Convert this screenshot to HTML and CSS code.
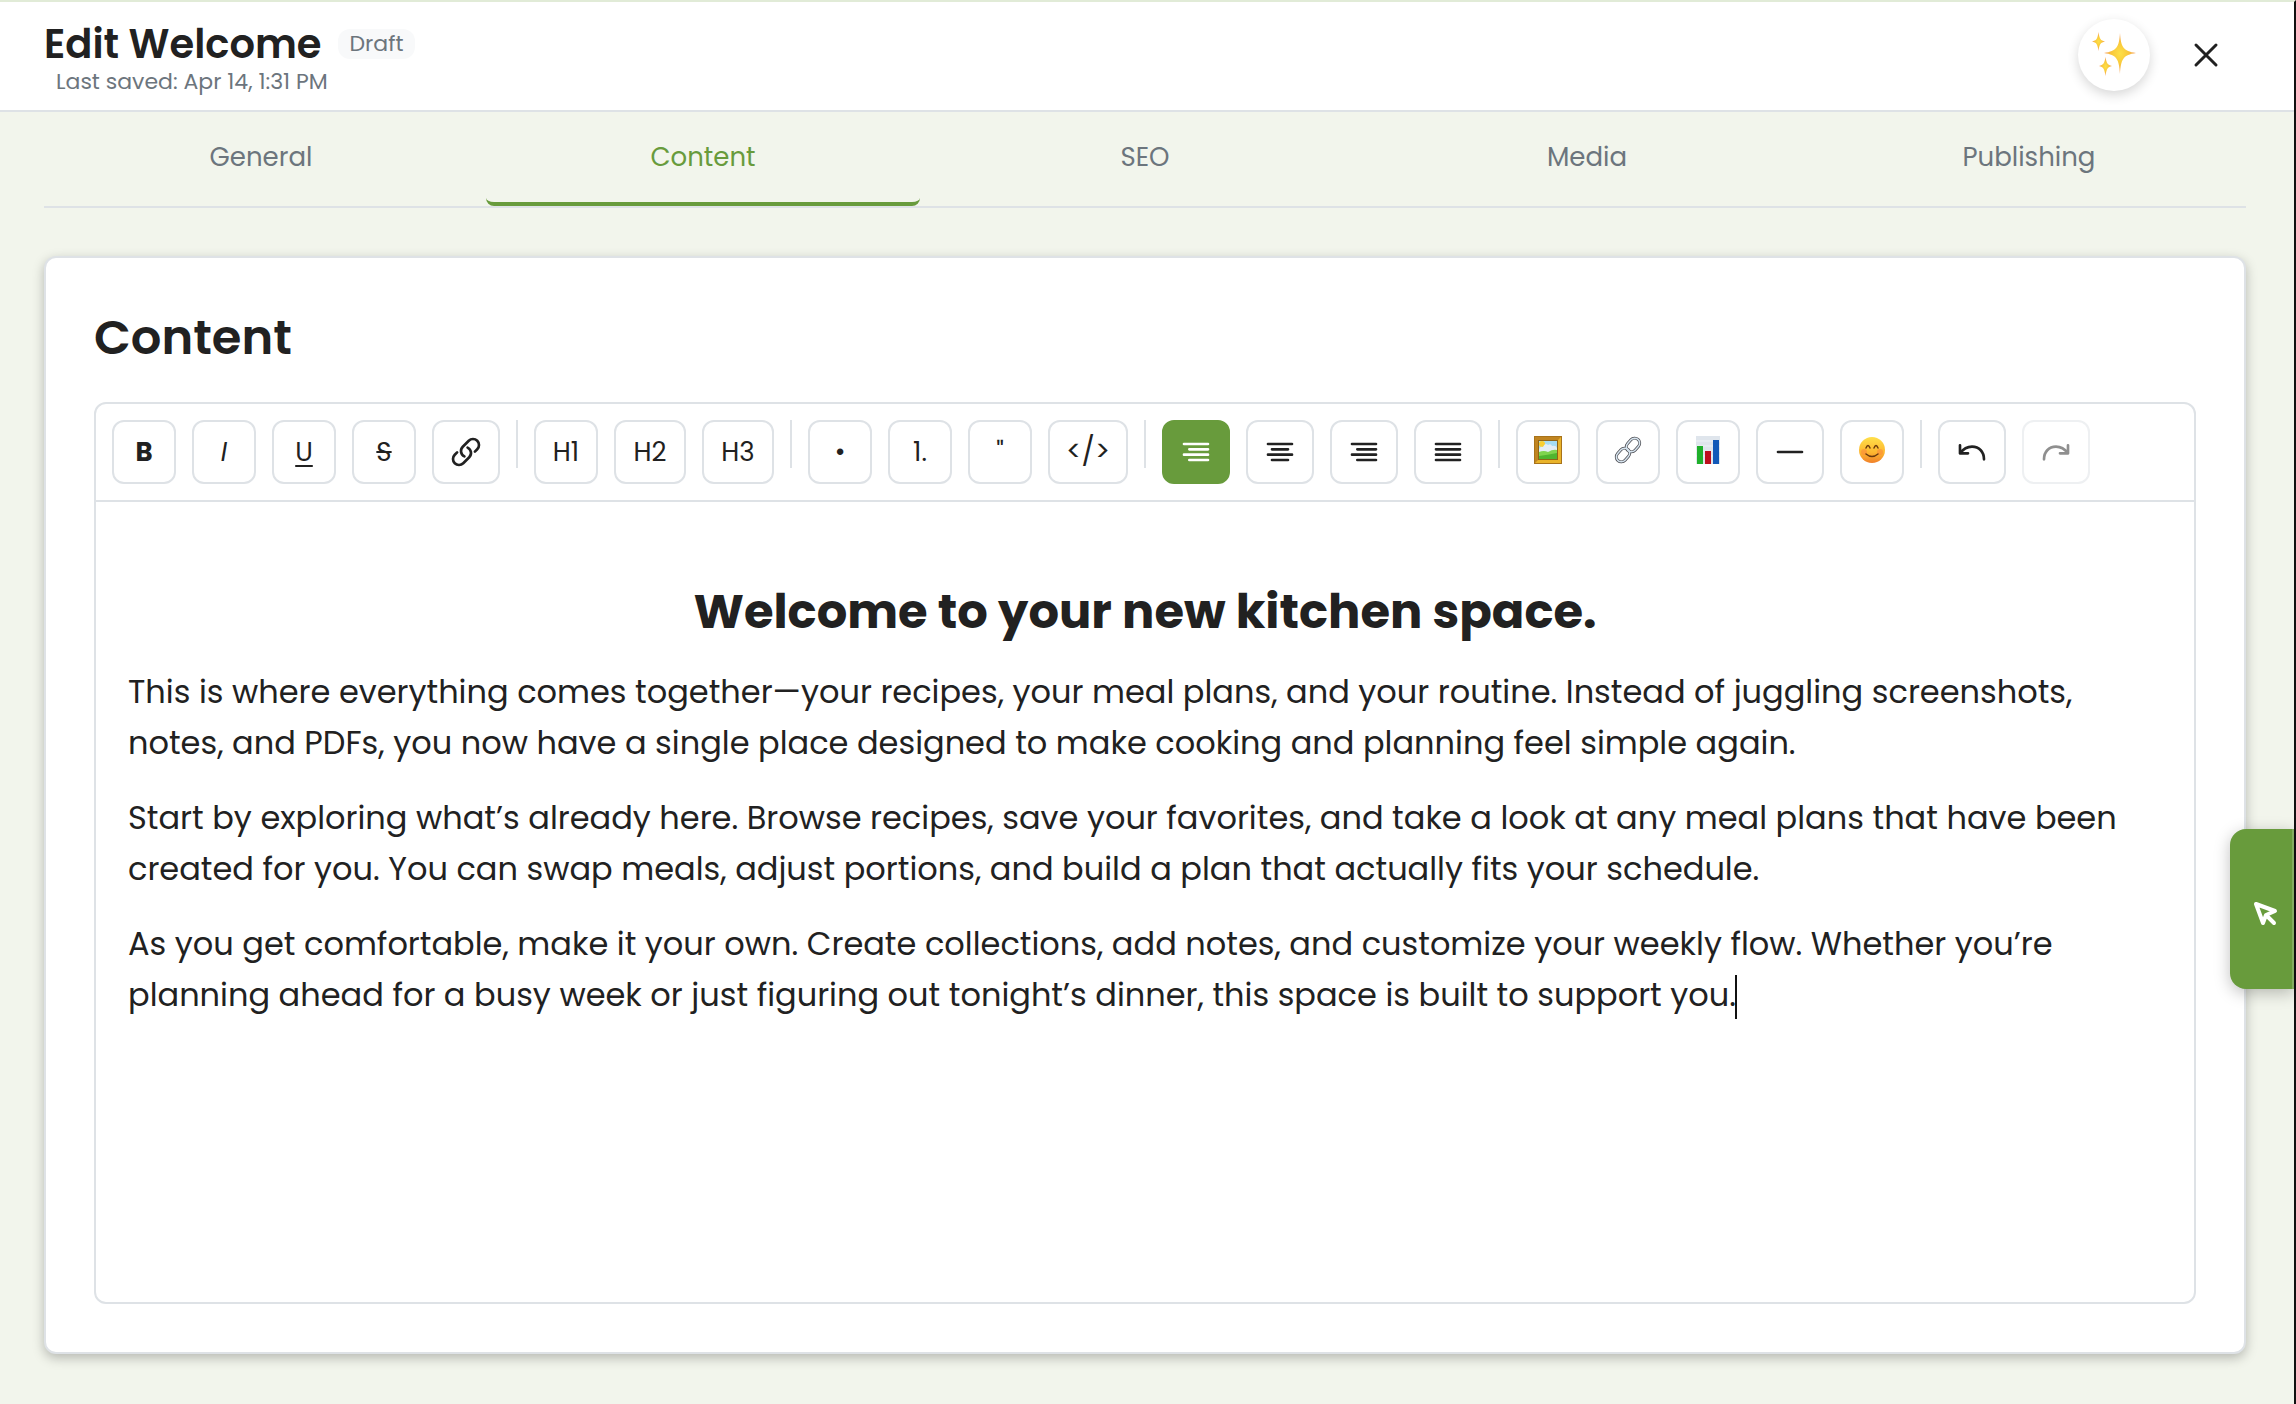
FILE: index.html
```html
<!DOCTYPE html>
<html lang="en">
<head>
    <meta charset="UTF-8">
    <meta name="viewport" content="width=device-width, initial-scale=1.0">
    <title>Edit Welcome</title>
    <link rel="stylesheet" href="styles.css">
</head>
<body>
    <header class="page-header">
        <div class="header-info">
            <div class="title-row">
                <h1>Edit Welcome</h1>
                <span class="badge">Draft</span>
            </div>
            <p class="last-saved">Last saved: Apr 14, 1:31 PM</p>
        </div>
        <div class="header-actions">
            <button type="button" class="ai-btn" aria-label="AI assistant">
                <svg width="48" height="48" viewBox="0 0 48 48">
                    <defs>
                        <radialGradient id="spark">
                            <stop offset="0" stop-color="#fde047"/>
                            <stop offset="0.5" stop-color="#f9c93b"/>
                            <stop offset="1" stop-color="#f59a5a"/>
                        </radialGradient>
                    </defs>
                    <g fill="url(#spark)">
                        <path d="M30 2C31 16 33 20 46 22C33 24 31 28 30 43C29 28 27 24 14 22C27 20 29 16 30 2Z"/>
                        <path d="M8.500 1C9.500 8 10.500 9.500 15 10.500C10.500 11.500 9.500 13 8.500 20C7.500 13 6.500 11.500 2 10.500C6.500 9.500 7.500 8 8.500 1Z"/>
                        <path d="M15.500 26C16.500 32 17.500 34 22 35C17.500 36 16.500 38 15.500 45C14.500 38 13.500 36 9 35C13.500 34 14.500 32 15.500 26Z"/>
                    </g>
                </svg>
            </button>
            <button type="button" class="close-btn" aria-label="Close">
                <svg width="32" height="32" viewBox="0 0 32 32">
                    <path d="M6 6L26 26M26 6L6 26" fill="none" stroke="currentColor" stroke-width="3" stroke-linecap="round"/>
                </svg>
            </button>
        </div>
    </header>

    <nav class="tabs">
        <button type="button" class="tab">General</button>
        <button type="button" class="tab active">Content</button>
        <button type="button" class="tab">SEO</button>
        <button type="button" class="tab">Media</button>
        <button type="button" class="tab">Publishing</button>
    </nav>

    <main class="card">
        <h2 class="card-title">Content</h2>
        <div class="editor">
            <div class="toolbar">
                <button type="button" class="tool"><b>B</b></button>
                <button type="button" class="tool"><i>I</i></button>
                <button type="button" class="tool"><u>U</u></button>
                <button type="button" class="tool"><s>S</s></button>
                <button type="button" class="tool tool-icon" aria-label="Link">
                    <svg class="icon" viewBox="0 0 24 24"><path d="M13.190 8.688a4.500 4.500 0 0 1 1.242 7.244l-4.500 4.500a4.500 4.500 0 0 1-6.364-6.364l1.757-1.757m13.350-.622l1.757-1.757a4.500 4.500 0 0 0-6.364-6.364l-4.500 4.500a4.500 4.500 0 0 0 1.242 7.244"/></svg>
                </button>
                <span class="separator"></span>

                <button type="button" class="tool">H1</button>
                <button type="button" class="tool tool-wide">H2</button>
                <button type="button" class="tool tool-wide">H3</button>
                <span class="separator"></span>

                <button type="button" class="tool">•</button>
                <button type="button" class="tool">1.</button>
                <button type="button" class="tool">"</button>
                <button type="button" class="tool tool-code">&lt;/&gt;</button>
                <span class="separator"></span>

                <button type="button" class="tool tool-icon active" aria-label="Align left">
                    <svg class="icon" viewBox="0 0 24 24"><path d="M3 6H21M7 10H21M3 14H21M7 18H21"/></svg>
                </button>
                <button type="button" class="tool tool-icon" aria-label="Align center">
                    <svg class="icon" viewBox="0 0 24 24"><path d="M3 6H21M6 10H18M3 14H21M6 18H18"/></svg>
                </button>
                <button type="button" class="tool tool-icon" aria-label="Align right">
                    <svg class="icon" viewBox="0 0 24 24"><path d="M3 6H21M7 10H21M3 14H21M7 18H21"/></svg>
                </button>
                <button type="button" class="tool tool-icon" aria-label="Justify">
                    <svg class="icon" viewBox="0 0 24 24"><path d="M3 6H21M3 10H21M3 14H21M3 18H21"/></svg>
                </button>
                <span class="separator"></span>

                <button type="button" class="tool tool-emoji" aria-label="Insert image">
                    <svg width="28" height="28" viewBox="0 0 28 28">
                        <rect width="28" height="28" fill="#a8731a"/>
                        <rect x="1" y="1" width="26" height="26" fill="#e9b32a"/>
                        <path d="M1 1H27L24 4H4V24L1 27Z" fill="#c08420"/>
                        <rect x="4" y="4" width="20" height="20" fill="#8f6416"/>
                        <rect x="5" y="5" width="18" height="18" fill="#a5dcf2"/>
                        <circle cx="8" cy="8" r="3" fill="#f9cf2f"/>
                        <path d="M5 14q1-4 4-3q2-5 5-2q3-2 4 1q4-1 5 2v4H5z" fill="#e4edf3"/>
                        <path d="M5 16q5-2 9 0q5-3 9-2v9H5z" fill="#7fd44e"/>
                        <path d="M5 20q8-1 18-3v6H5z" fill="#4fb52f"/>
                    </svg>
                </button>
                <button type="button" class="tool tool-emoji" aria-label="Attach file">
                    <svg width="28" height="28" viewBox="0 0 28 28" fill="none">
                        <g stroke="#4a4a50" stroke-width="3">
                            <rect x="-5" y="-7.500" width="10" height="15" rx="5" transform="translate(9 19) rotate(42)"/>
                            <rect x="-5" y="-7.500" width="10" height="15" rx="5" transform="translate(19 9) rotate(42)"/>
                        </g>
                        <g stroke="#d5e3ee" stroke-width="1.500">
                            <rect x="-5" y="-7.500" width="10" height="15" rx="5" transform="translate(19 9) rotate(42)"/>
                            <rect x="-5" y="-7.500" width="10" height="15" rx="5" transform="translate(9 19) rotate(42)"/>
                        </g>
                    </svg>
                </button>
                <button type="button" class="tool tool-emoji" aria-label="Insert chart">
                    <svg width="28" height="28" viewBox="0 0 28 28">
                        <rect x="2" width="24" height="28" fill="#dfe5ec"/>
                        <path d="M2 5H26M2 10H26M2 15H26M2 20H26" stroke="#eef2f6"/>
                        <rect x="3" y="10" width="6" height="18" fill="#1fb02b"/>
                        <rect x="11" y="15" width="6" height="13" fill="#bd0f1d"/>
                        <rect x="19" y="4" width="6" height="24" fill="#1259b8"/>
                    </svg>
                </button>
                <button type="button" class="tool tool-icon" aria-label="Horizontal rule">
                    <svg class="icon" viewBox="0 0 24 24"><path d="M3 12H21"/></svg>
                </button>
                <button type="button" class="tool tool-emoji" aria-label="Insert emoji">
                    <svg width="28" height="28" viewBox="0 0 28 28" fill="none" stroke-linecap="round">
                        <defs>
                            <linearGradient id="face" x2="0" y2="1">
                                <stop offset="0" stop-color="#ffe04a"/>
                                <stop offset="0.6" stop-color="#fdb62f"/>
                                <stop offset="1" stop-color="#f0802a"/>
                            </linearGradient>
                        </defs>
                        <circle cx="14" cy="14" r="13" fill="url(#face)"/>
                        <circle cx="6" cy="16" r="3" fill="#fb8a3c" opacity="0.6"/>
                        <circle cx="22" cy="16" r="3" fill="#fb8a3c" opacity="0.6"/>
                        <path d="M8 12q2-5 4 0M16 12q2-5 4 0M8 18q6 5 12 0" stroke="#6b3a0c" stroke-width="1.500"/>
                    </svg>
                </button>
                <span class="separator"></span>

                <button type="button" class="tool tool-icon" aria-label="Undo">
                    <svg class="icon" viewBox="0 0 24 24"><path d="M3 7V13H9M3 13C6 9 9 8 12 8C17.500 8 21 12 21 17.500"/></svg>
                </button>
                <button type="button" class="tool tool-icon" aria-label="Redo" disabled>
                    <svg class="icon" viewBox="0 0 24 24"><path d="M21 7V13H15M21 13C18 9 15 8 12 8C6.500 8 3 12 3 17.500"/></svg>
                </button>
            </div>

            <div class="editor-content" contenteditable="true">
                <h2>Welcome to your new kitchen space.</h2>
                <p>This is where everything comes together—your recipes, your meal plans, and your routine. Instead of juggling screenshots, notes, and PDFs, you now have a single place designed to make cooking and planning feel simple again.</p>
                <p>Start by exploring what’s already here. Browse recipes, save your favorites, and take a look at any meal plans that have been created for you. You can swap meals, adjust portions, and build a plan that actually fits your schedule.</p>
                <p>As you get comfortable, make it your own. Create collections, add notes, and customize your weekly flow. Whether you’re planning ahead for a busy week or just figuring out tonight’s dinner, this space is built to support you.<span class="caret"></span></p>
            </div>
        </div>
    </main>

    <button type="button" class="side-btn" aria-label="Select element">
        <svg width="28" height="28" viewBox="0 0 28 28" fill="none" stroke="currentColor" stroke-width="4" stroke-linecap="round" stroke-linejoin="round">
            <path d="M5 5L12 24L15 16L24 12ZM15 16L23 24"/>
        </svg>
    </button>
</body>
</html>
```

FILE: styles.css
```css
* {
    box-sizing: border-box;
}
body {
    display: flex;
    flex-direction: column;
    min-height: 100vh;
    margin: 0;
    font-family: Poppins, Inter, sans-serif;
    color: #212121;
    background-color: #f2f5ec;
    border-top: 2px solid #e1ebd7;
    border-right: 2px solid #111;
}
h1, h2, p {
    margin: 0;
}
button {
    padding: 0;
    font-family: inherit;
    color: inherit;
    background: none;
    border: none;
    cursor: pointer;
}
svg {
    display: block;
}

/* Header */
.page-header {
    display: flex;
    justify-content: space-between;
    align-items: center;
    height: 110px;
    padding: 0 56px 2px 44px;
    background-color: #fff;
    border-bottom: 2px solid #dee2e6;
}
.header-info {
    padding-top: 10px;
}
.title-row {
    display: flex;
    align-items: center;
    gap: 16px;
}
h1 {
    font-size: 40px;
    font-weight: 600;
    line-height: 44px;
}
.badge {
    padding: 0 12px;
    font-size: 22px;
    line-height: 30px;
    color: #6c757d;
    background-color: #f8f9fa;
    border-radius: 12px;
}
.last-saved {
    margin-left: 12px;
    font-size: 22px;
    line-height: 32px;
    color: #6c757d;
}
.header-actions {
    display: flex;
    align-items: center;
    gap: 24px;
}
.ai-btn {
    display: grid;
    place-items: center;
    width: 72px;
    height: 72px;
    background-color: #fff;
    border-radius: 50%;
    box-shadow: 0 4px 12px rgba(0, 0, 0, 0.16);
}
.close-btn {
    display: grid;
    place-items: center;
    width: 64px;
    height: 64px;
}

/* Tabs */
.tabs {
    display: grid;
    grid-template-columns: repeat(5, 1fr);
    gap: 8px;
    margin: 0 48px 0 44px;
    border-bottom: 2px solid #dee2e6;
}
.tab {
    height: 94px;
    font-size: 26px;
    color: #6c757d;
    border-bottom: 4px solid transparent;
    border-radius: 8px;
}
.tab.active {
    color: #689b3c;
    border-bottom-color: #689b3c;
}

/* Card */
.card {
    display: flex;
    flex-direction: column;
    flex: 1;
    margin: 48px 48px 50px 44px;
    padding: 48px;
    background-color: #fff;
    border: 2px solid #dee2e6;
    border-radius: 12px;
    box-shadow: 0 4px 12px rgba(0, 0, 0, 0.25);
}
.card-title {
    margin-bottom: 32px;
    font-size: 48px;
    font-weight: 600;
    line-height: 64px;
}
.editor {
    flex: 1;
    border: 2px solid #dee2e6;
    border-radius: 12px;
}
.toolbar {
    display: flex;
    flex-wrap: wrap;
    gap: 16px;
    padding: 16px;
    border-bottom: 2px solid #dee2e6;
}
.tool {
    display: grid;
    place-items: center;
    width: 64px;
    height: 64px;
    font-size: 26px;
    border: 2px solid #dee2e6;
    border-radius: 12px;
}
.tool u {
    text-underline-offset: 4px;
}
.tool-icon {
    width: 68px;
}
.tool-wide {
    width: 72px;
}
.tool-code {
    width: 80px;
    font-size: 28px;
}
.tool-emoji {
    padding-bottom: 4px;
}
.tool.active {
    color: #fff;
    background-color: #689b3c;
    border-color: #689b3c;
}
.tool:disabled {
    opacity: 0.5;
}
.icon {
    width: 32px;
    height: 32px;
    fill: none;
    stroke: currentColor;
    stroke-width: 2;
    stroke-linecap: round;
    stroke-linejoin: round;
}
.separator {
    width: 2px;
    height: 48px;
    background-color: #dee2e6;
}

/* Editor content */
.editor-content {
    padding: 32px;
    font-size: 32px;
    line-height: 51px;
    outline: none;
}
.editor-content h2 {
    margin: 48px 0 24px;
    font-size: 48px;
    font-weight: 700;
    line-height: 60px;
    text-align: center;
}
.editor-content p {
    margin-bottom: 24px;
}
.caret {
    display: inline-block;
    width: 2px;
    height: 44px;
    margin: 0 -1px;
    vertical-align: middle;
    background-color: #111;
}

/* Floating button on the right edge */
.side-btn {
    position: fixed;
    right: 2px;
    top: 829px;
    display: grid;
    place-items: center;
    width: 64px;
    height: 160px;
    padding: 8px 0 0 8px;
    color: #fff;
    background-color: #689b3c;
    border-right: 2px solid #84ad61;
    border-radius: 16px 0 0 16px;
    box-shadow: 0 4px 16px rgba(0, 0, 0, 0.25);
}
```
